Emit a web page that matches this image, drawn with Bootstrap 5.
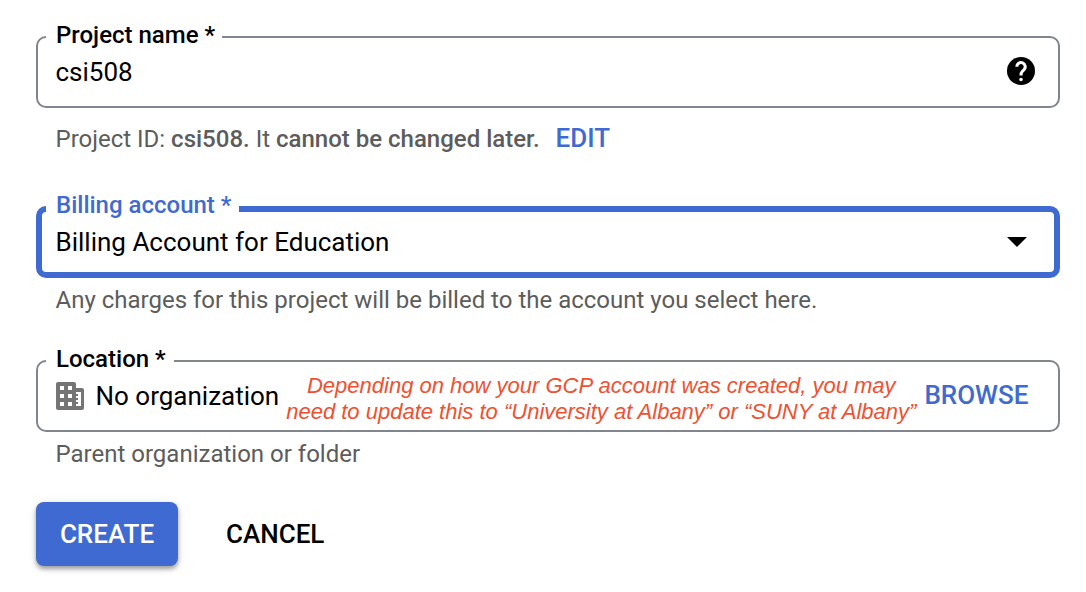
<!DOCTYPE html>
<html lang="en">
<head>
  <meta charset="UTF-8" />
  <meta name="viewport" content="width=device-width, initial-scale=1.0" />
  <title>New Project</title>
  <link href="https://cdn.jsdelivr.net/npm/bootstrap@5.3.0/dist/css/bootstrap.min.css" rel="stylesheet" />
  <style>
    body {
      font-family: Roboto, "Liberation Sans", sans-serif;
      font-size: 26px;
      line-height: 32px;
      color: #000;
      background: #fff;
    }
    #project-form {
      padding: 36px 26px 26px 36px;
    }
    .outlined-field {
      height: 72px;
      border: 2px solid #80868b;
      border-radius: 10px;
      padding: 0 23px 0 17.5px;
    }
    .outlined-field.focused {
      border: 6px solid #3f6ad1;
      padding: 0 27px 0 13.5px;
    }
    /* label sits on top of the border and cuts the notch */
    .field-label {
      position: absolute;
      top: -18px;
      left: 8px;
      padding: 0 7px 0 10px;
      background: #fff;
      font-size: 24px;
      font-weight: 500;
      line-height: 30px;
      white-space: nowrap;
    }
    .focused .field-label {
      top: -22px;
      left: 4px;
      padding-right: 8px;
      color: #3f6ad1;
    }
    .location-label { padding-right: 8px; }
    .hint {
      margin: 6px 0 44px;
      padding-left: 19.5px;
      font-size: 24px;
      line-height: 32px;
      color: #5c5c5c;
      white-space: nowrap;
    }
    .project-id { margin: 15px 0 51px; }
    .location-hint { margin-bottom: 32px; }
    .hint b { font-weight: 500; }
    .text-action {
      padding-bottom: 2px;
      color: #3f6ad1;
      font-size: 26px;
      font-weight: 500;
      line-height: 30px;
      text-decoration: none;
    }
    .org-icon { margin: 0 11.5px 0 .5px; }
    .annotation {
      margin: 0 8px 0 7px;
      padding-top: 5px;
      font-family: "Liberation Sans", Arial, sans-serif;
      font-style: italic;
      font-size: 22px;
      line-height: 26px;
      color: #f0502f;
      white-space: nowrap;
    }
    .btn-create, .btn-cancel {
      height: 64px;
      font-size: 26px;
      font-weight: 500;
      border: 0;
      border-radius: 8px;
    }
    .btn-create, .btn-create:hover {
      width: 142px;
      padding: 0;
      color: #fff;
      background: #3f6ad1;
      box-shadow: 0 3px 4px rgba(0, 0, 0, .32), 0 2px 10px rgba(0, 0, 0, .12);
    }
    .btn-cancel { padding: 0 48px; color: #000; }
    svg { display: block; flex: none; }
    .help-icon { margin-bottom: 2px; }
  </style>
</head>
<body>
  <form id="project-form">
    <div class="outlined-field position-relative d-flex align-items-center justify-content-between">
      <span class="field-label">Project name *</span>
      <span>csi508</span>
      <svg class="help-icon" width="28" height="28" viewBox="2 2 20 20">
        <circle cx="12" cy="12" r="10" />
        <path fill="none" stroke="#fff" stroke-width="2.2" d="M9 9a3 3 0 1 1 5.12 2.12l-1.24 1.26C12.3 13 12 13.8 12 15.2" />
        <circle cx="12" cy="18" r="1.25" fill="#fff" />
      </svg>
    </div>
    <div class="hint project-id d-flex align-items-center">
      <span>Project ID: <b>csi508.</b> It <b>cannot be changed later.</b></span>
      <a class="text-action ms-3" href="#">EDIT</a>
    </div>

    <div class="outlined-field focused position-relative d-flex align-items-center justify-content-between">
      <span class="field-label">Billing account *</span>
      <span>Billing Account for Education</span>
      <svg width="20" height="10" viewBox="0 0 20 10"><path d="M0 0h20L10 10z" /></svg>
    </div>
    <div class="hint">Any charges for this project will be billed to the account you select here.</div>

    <div class="outlined-field position-relative d-flex align-items-center">
      <span class="field-label location-label">Location *</span>
      <svg class="org-icon" width="28" height="28" viewBox="0 0 28 28">
        <rect width="20" height="28" rx="2" fill="#757575" />
        <rect x="16" y="6" width="12" height="22" rx="2" fill="#757575" />
        <path fill="#fff" d="M4 4h4v4H4zM12 4h4v4h-4zM4 12h4v4H4zM12 12h4v4h-4zM4 20h4v4H4zM12 20h4v4h-4zM20 10h5v14h-5v-2h2v-2h-2v-2h2v-2h-2v-2h2v-2h-2z" />
      </svg>
      <span>No organization</span>
      <span class="annotation text-center">Depending on how your GCP account was created, you may<br>need to update this to “University at Albany” or “SUNY at Albany”</span>
      <a class="text-action" href="#">BROWSE</a>
    </div>
    <div class="hint location-hint">Parent organization or folder</div>

    <div class="d-flex">
      <button type="button" class="btn btn-create">CREATE</button>
      <button type="button" class="btn btn-cancel">CANCEL</button>
    </div>
  </form>
  <script src="https://cdn.jsdelivr.net/npm/bootstrap@5.3.0/dist/js/bootstrap.bundle.min.js"></script>
</body>
</html>
